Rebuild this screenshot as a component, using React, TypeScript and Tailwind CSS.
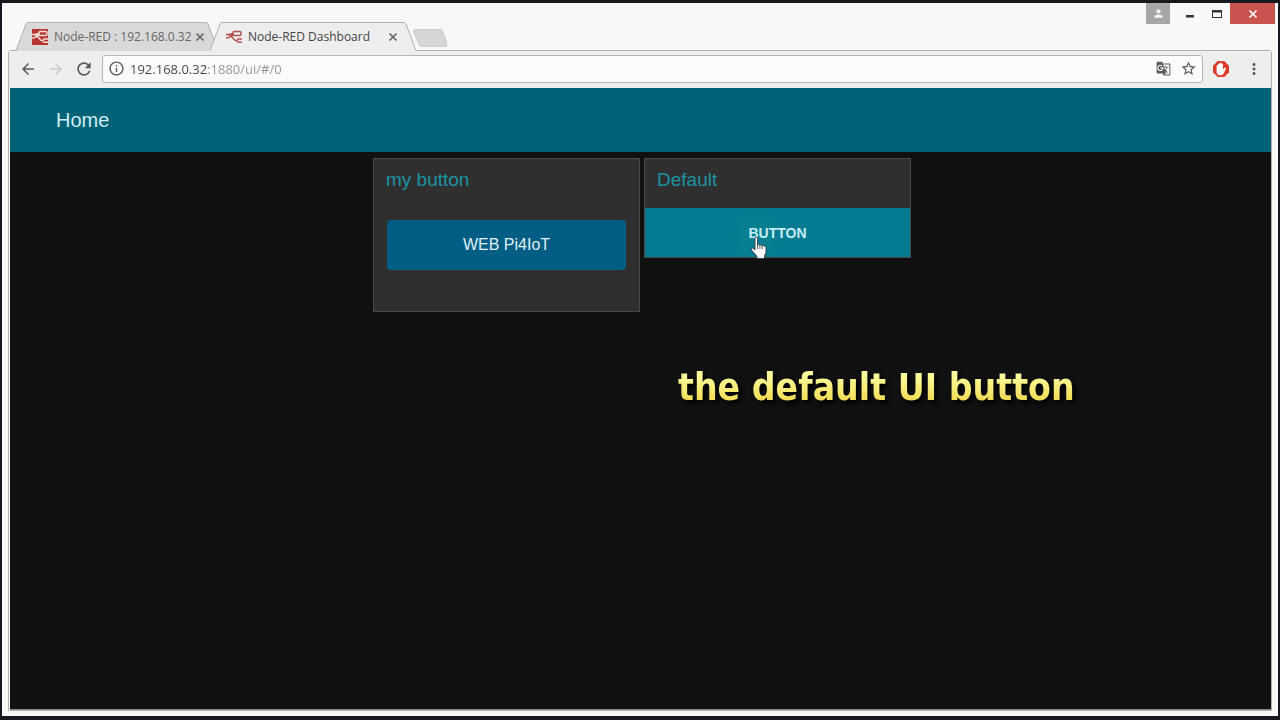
import { MdArrowBack, MdArrowForward, MdGTranslate, MdInfoOutline, MdMoreVert, MdPerson, MdRefresh, MdStarBorder } from 'react-icons/md';

function NodeRedMark({ color }: { color: string }) {
  return (
    <g fill="none" stroke={color} strokeWidth="1.5">
      <rect x="7" y="2.6" width="8" height="3.8" rx="1.2" />
      <path d="M0 5.6h2.5c2.2 0 2.2-1.2 4.5-1.2M0 9c5 0 5-2.800 7.5-3.400M2.500 6c5 .2 4 5.800 8 5.800" />
      <path d="M16 10h-3.500c-1.800 0-1.800 3.200 0 3.200H16" />
    </g>
  );
}

function NodeRedIcon({ solid }: { solid?: boolean }) {
  return (
    <svg viewBox="0 0 16 16" className="w-4 h-4 shrink-0">
      {solid && <rect width="16" height="16" fill="#b5372f" />}
      <NodeRedMark color={solid ? '#f3dcda' : '#b5504a'} />
    </svg>
  );
}

function Tab({ title, active }: { title: string; active?: boolean }) {
  return (
    <div className={`relative flex items-center h-[29px] pl-4 ${active ? 'z-10 w-[206px] -ml-2 pr-[18px]' : 'w-[202px] pr-[13px]'}`}>
      <div className="absolute inset-0 flex">
        <svg viewBox="0 0 12 29" className="w-3 h-[29px] shrink-0">
          <path d="M0 29L10 2Q11 .5 12 .5V29Z" fill={active ? '#eeeeee' : '#d9d9d9'} />
          <path d="M0 28.500L10 2Q11 .5 12 .5" fill="none" stroke="#b0b0b0" />
        </svg>
        <div className={`flex-1 border-t border-[#b0b0b0] ${active ? 'bg-[#eeeeee]' : 'bg-[#d9d9d9]'}`} />
        <svg viewBox="0 0 12 29" className="w-3 h-[29px] shrink-0">
          <path d="M12 29L2 2Q1 .5 0 .5V29Z" fill={active ? '#eeeeee' : '#d9d9d9'} />
          <path d="M12 28.500L2 2Q1 .5 0 .5" fill="none" stroke="#b0b0b0" />
        </svg>
      </div>
      <div className="relative flex flex-1 items-center">
        <NodeRedIcon solid={!active} />
        <span className={`ml-1.5 flex-1 whitespace-nowrap text-[12px] leading-4 ${active ? 'text-[#444444]' : 'text-[#666666]'}`}>{title}</span>
        <button aria-label={`Close ${title}`} className="w-2.5 h-4 flex items-center justify-center text-[#666666]">
          <svg viewBox="0 0 10 10" className="w-2.5 h-2.5 shrink-0" stroke="currentColor" strokeWidth="1.7"><path d="M1.500 1.500l7 7M8.500 1.500l-7 7" /></svg>
        </button>
      </div>
    </div>
  );
}

function WindowControls() {
  return (
    <div className="flex self-start h-[21px] mr-[3px]">
      <button aria-label="Profile" className="w-6 mr-1.5 bg-[#a6a6a6] text-[#f3f3f3] flex items-center justify-center"><MdPerson size={13} /></button>
      <button aria-label="Minimize" className="w-[27px] flex items-center justify-center">
        <svg viewBox="0 0 12 12" className="w-3 h-3"><path d="M2 7h8v2.500H2z" fill="#333333" /></svg>
      </button>
      <button aria-label="Maximize" className="w-[27px] flex items-center justify-center">
        <svg viewBox="0 0 12 12" className="w-3 h-3"><path d="M1 2h10v8H1zM2 4.500v4.500h8V4.500z" fill="#333333" fillRule="evenodd" /></svg>
      </button>
      <button aria-label="Close" className="w-[45px] bg-[#c9544d] flex items-center justify-center">
        <svg viewBox="0 0 10 10" className="w-2.5 h-2.5" stroke="#ffffff" strokeWidth="1.7"><path d="M1.500 1.500l7 7M8.500 1.500l-7 7" /></svg>
      </button>
    </div>
  );
}

function AdBlockIcon() {
  return (
    <svg viewBox="0 0 16 16" className="w-4 h-4">
      <path d="M4.700 0h6.600L16 4.700v6.600L11.300 16H4.700L0 11.300V4.700z" fill="#dc3b2c" />
      <path d="M3.600 8.500V4.500q.8-1 1.500 0V3q.8-1 1.600 0V2q1-1 1.700 0v1q1-.9 1.600 0v5.500l1.800-2q1.200-.3 1.200.7L11 12q-1.200 2.200-3.500 2.200Q3.600 14 3.600 10.500z" fill="#ffffff" />
    </svg>
  );
}

function Toolbar() {
  return (
    <div className="flex items-center h-[37px] pb-0.5 pl-[10px] pr-2 bg-[#eeeeee] text-[#5a5a5a]">
      <button aria-label="Back" className="w-[18px] mr-[10px]"><MdArrowBack size={18} /></button>
      <button aria-label="Forward" className="w-[18px] mr-[9px] text-[#cccccc]"><MdArrowForward size={18} /></button>
      <button aria-label="Reload" className="w-5 mr-2"><MdRefresh size={20} /></button>
      <div className="flex flex-1 items-center h-7 pl-[5px] pr-[5px] rounded-[3px] border border-[#b8b8b8] bg-[#fbfbfb]">
        <MdInfoOutline size={17} />
        <input
          aria-label="Address"
          defaultValue="192.168.0.32:1880/ui/#/0"
          className="flex-1 ml-[5px] text-[13px] leading-5 text-transparent bg-clip-text bg-[linear-gradient(90deg,#444444_77px,#929292_77px)] focus:outline-none"
        />
        <button aria-label="Translate this page" className="mr-[9px]"><MdGTranslate size={15} /></button>
        <button aria-label="Bookmark this page"><MdStarBorder size={17} /></button>
      </div>
      <button aria-label="AdBlock" className="ml-[10px]"><AdBlockIcon /></button>
      <button aria-label="Menu" className="ml-4"><MdMoreVert size={18} /></button>
    </div>
  );
}

function HandCursor() {
  return (
    <svg viewBox="0 0 18 24" className="absolute left-[105px] top-7 w-[18px] h-6 pointer-events-none">
      <path
        d="M5 2.500q0-1.500 1.300-1.500T7.600 2.500V9q1-1.200 2.300.2 1.200-1 2.300.5 1.300-.8 2 .4 1.600-.4 1.800 1.400v5l-1.500 3.500V22.500H7V20.500L2 14.500q-1.500-2 0-2.500 1.500-.2 3 2z"
        fill="#ffffff" stroke="#39424a" strokeWidth="1" strokeLinejoin="round"
      />
      <path d="M7.600 9v4M9.900 9.500V13M12.200 10v3" stroke="#39424a" strokeWidth=".9" />
    </svg>
  );
}

export default function App() {
  return (
    <div className="relative min-h-screen flex flex-col bg-[#f8f8f8] border-x-2 border-t-[3px] border-b-4 border-[#17181f] px-1.5 pb-[5px] font-['Open_Sans','Noto_Sans',sans-serif]">
      <div className="flex items-end justify-between h-12 -mb-px -mr-1.5 pl-2">
        <div className="flex items-end">
          <Tab title="Node-RED : 192.168.0.32" />
          <Tab title="Node-RED Dashboard" active />
          <button aria-label="New tab" className="mb-1 -ml-1">
            <svg viewBox="0 0 36 18" className="w-9 h-[18px]"><path d="M3 .5h25q2 0 3 2l4 12q.5 3-2 3H10q-2 0-3-2L1.500 3Q1 .5 3 .5z" fill="#d6d6d6" stroke="#cecece" /></svg>
          </button>
        </div>
        <WindowControls />
      </div>

      <div className="flex flex-1 flex-col border border-[#b0b0b0] rounded-t-[3px]">
        <Toolbar />
        <div className="flex flex-1 flex-col ml-px border-b border-[#8c8c8c] bg-[#101010] font-['Liberation_Sans',Arial,sans-serif]">
          <header className="flex items-center h-16 pl-[46px] bg-[#006277]">
            <h1 className="text-[20px] leading-6 text-[#cdeef2]">Home</h1>
          </header>

          <main className="flex flex-1 items-start justify-center gap-1 pt-1.5 pl-[3px]">
            <section className="w-[267px] h-[154px] bg-[#2f2f2f] border border-[#494949]">
              <h2 className="px-3 pt-[9px] text-[19px] leading-6 text-[#1c93a5]">my button</h2>
              <div className="px-[13px] pt-7">
                <button className="w-full h-[50px] rounded bg-[#005d83] text-[16px] leading-5 text-[#e0f1f7]">WEB Pi4IoT</button>
              </div>
            </section>

            <section className="w-[267px] bg-[#2f2f2f] border border-[#494949]">
              <h2 className="px-3 pt-[9px] pb-4 text-[19px] leading-6 text-[#1c93a5]">Default</h2>
              <div className="relative">
                <button className="block w-full h-[49px] bg-[#057b91] bg-[radial-gradient(circle_at_112px_28px,#077f90_14px,transparent_24px)] text-[14px] leading-5 font-bold text-[#c5edf4]">BUTTON</button>
                <HandCursor />
              </div>
            </section>
          </main>
        </div>
      </div>

      <p className="absolute left-[676px] top-[360px] whitespace-nowrap text-[37px] leading-[50px] font-bold font-['DejaVu_Sans_Condensed','DejaVu_Sans',sans-serif] text-transparent bg-clip-text bg-linear-to-b from-[#fdffa0] from-20% to-[#f0d94a] to-80% drop-shadow-[3px_3px_2px_#000000]">
        the default UI button
      </p>
    </div>
  );
}
